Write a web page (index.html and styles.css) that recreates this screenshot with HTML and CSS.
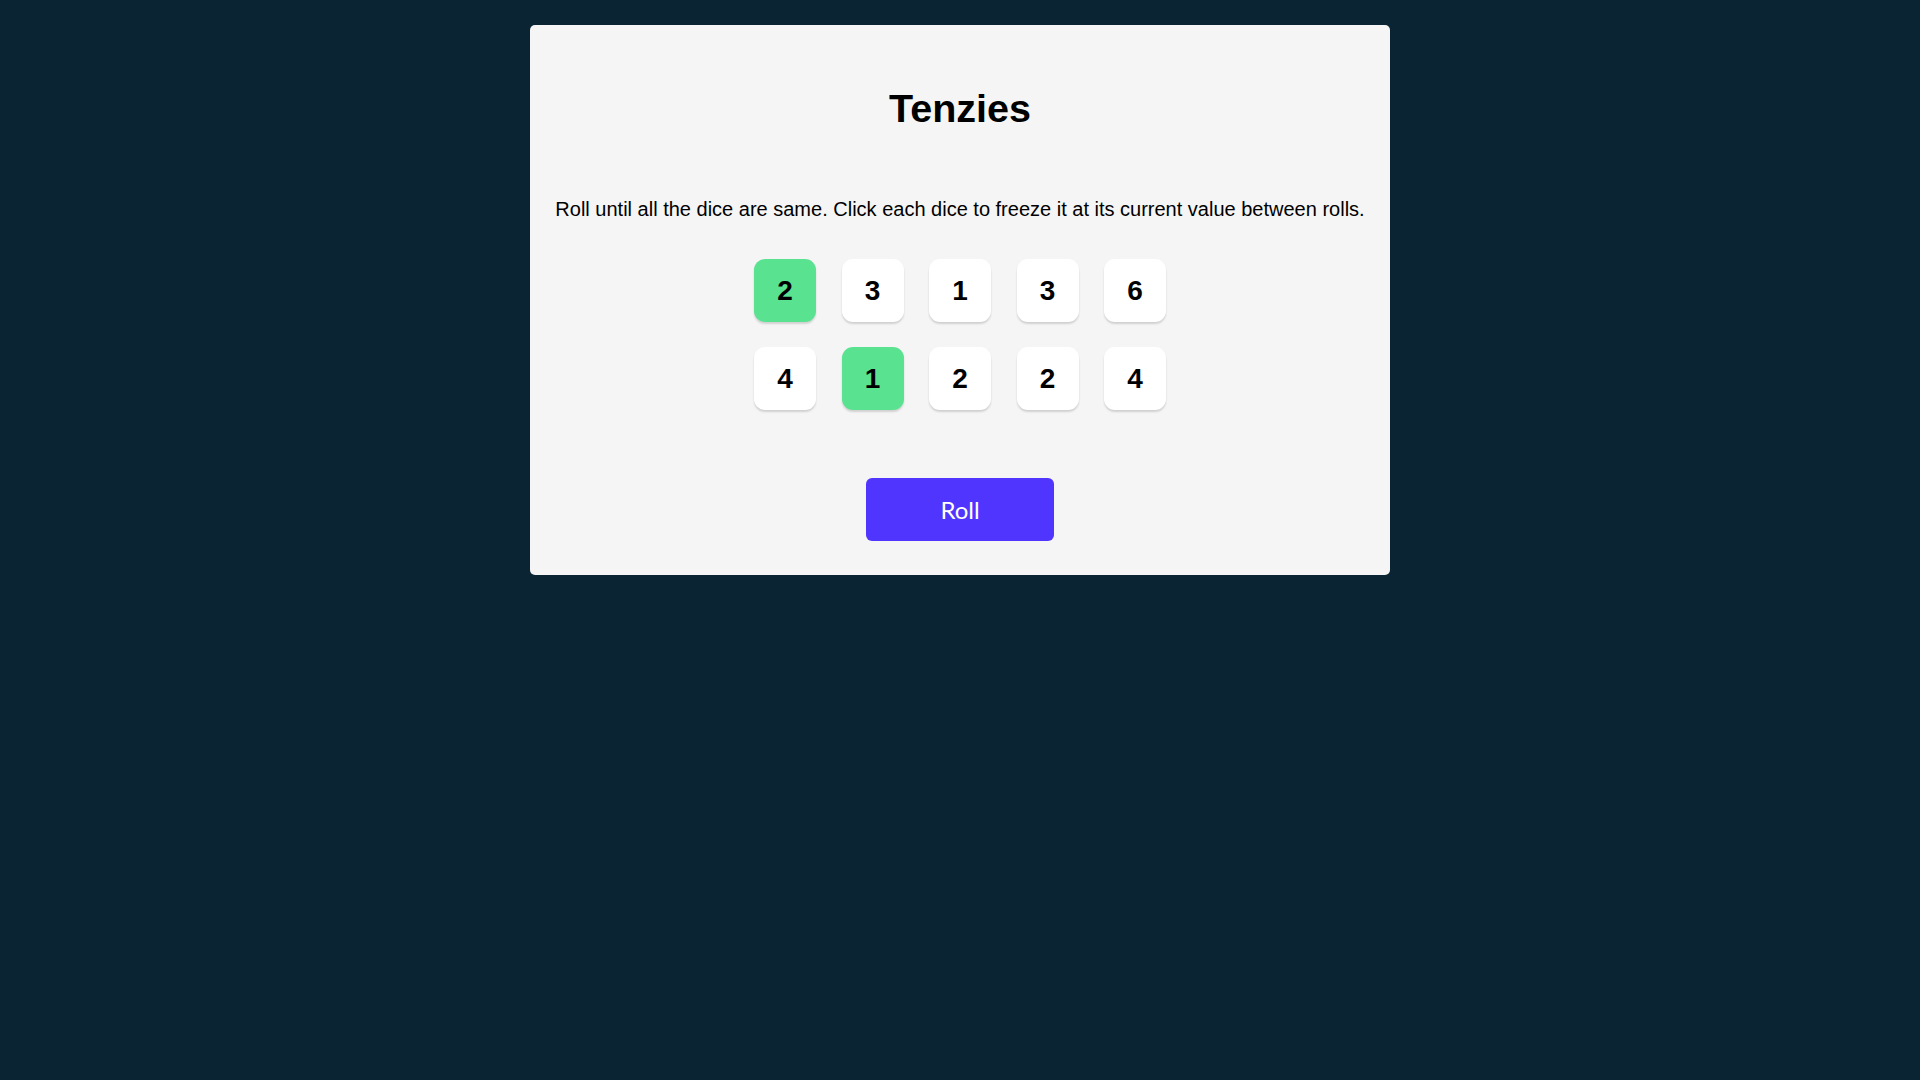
FILE: index.html
```html
<!DOCTYPE html>
<html lang="en">
<head>
<meta charset="utf-8">
<title>Tenzies</title>
<link rel="stylesheet" href="styles.css">
</head>
<body>
<main class="board">
  <h1 class="title">Tenzies</h1>
  <p class="instructions">Roll until all the dice are same. Click each dice to freeze it at its current value between rolls.</p>
  <div class="dice-grid">
    <div class="die held">2</div>
    <div class="die">3</div>
    <div class="die">1</div>
    <div class="die">3</div>
    <div class="die">6</div>
    <div class="die">4</div>
    <div class="die held">1</div>
    <div class="die">2</div>
    <div class="die">2</div>
    <div class="die">4</div>
  </div>
  <button class="roll-btn">Roll</button>
</main>
</body>
</html>
```
FILE: styles.css
```css
html, body {
  margin: 0;
  padding: 0;
}
body {
  background: #0b2434;
  min-height: 1080px;
  font-family: "Liberation Sans", Arial, sans-serif;
}
.board {
  width: 860px;
  margin: 25px auto 0;
  background: #f5f5f5;
  border-radius: 5px;
  display: flex;
  flex-direction: column;
  align-items: center;
  padding: 61px 0 34px;
  box-sizing: border-box;
}
.title {
  margin: 0;
  font-size: 39.5px;
  font-weight: 700;
  color: #000;
  line-height: 45px;
}
.instructions {
  margin: 67px 0 0;
  font-size: 20px;
  line-height: 23px;
  color: #000;
}
.dice-grid {
  margin-top: 38px;
  display: grid;
  grid-template-columns: repeat(5, 62px);
  column-gap: 25.5px;
  row-gap: 25px;
}
.die {
  height: 63px;
  background: #fff;
  border-radius: 11px;
  box-shadow: 0 2px 2px rgba(0, 0, 0, 0.15);
  display: flex;
  align-items: center;
  justify-content: center;
  font-size: 28px;
  font-weight: 700;
  color: #000;
}
.die.held {
  background: #59e391;
}
.roll-btn {
  margin-top: 68px;
  width: 188px;
  height: 63px;
  border: none;
  border-radius: 6px;
  background: #5035ff;
  color: #fff;
  font-family: Lato, "Open Sans", sans-serif;
  font-size: 24px;
  padding: 0;
}
```
